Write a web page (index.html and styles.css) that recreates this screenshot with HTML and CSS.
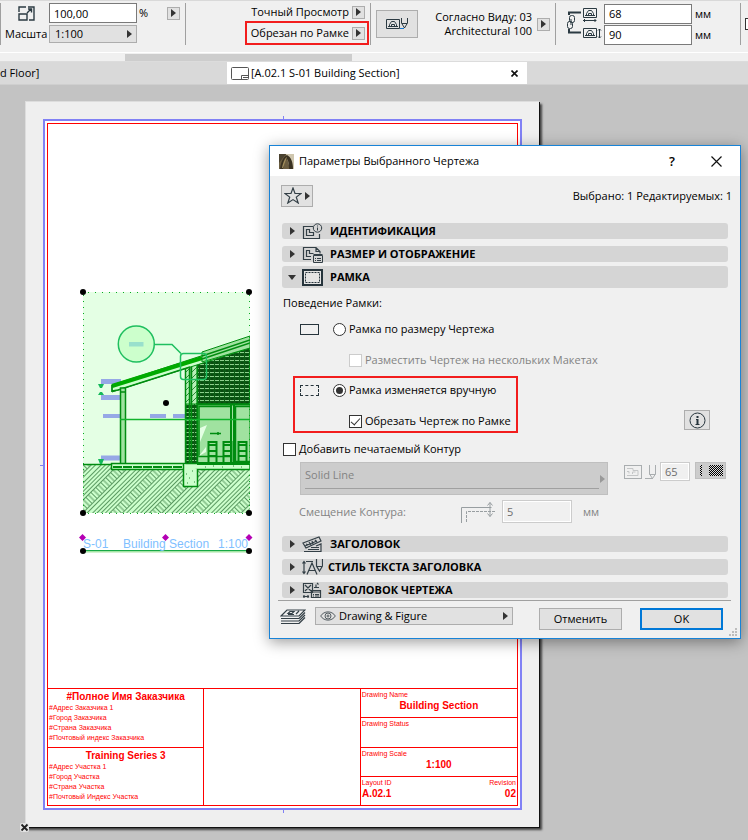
FILE: index.html
```html
<!DOCTYPE html>
<html lang="ru">
<head>
<meta charset="utf-8">
<title>Параметры Выбранного Чертежа</title>
<link rel="stylesheet" href="styles.css">
</head>
<body>
<header class="toolbar">
  <div class="group scale">
    <svg class="scale-icon" width="17" height="15" viewBox="0 0 17 15" fill="none" stroke="#2b3a42" stroke-width="1.4"><path d="M1 6V1h7M10 1h6v13h-5M1 8h8v6H1zM9 7l4-4M10 3h3.500v3.500"/></svg>
    <input class="field" type="text" value="100,00" aria-label="Масштаб, проценты">
    <span class="percent">%</span>
    <button class="mini" type="button" aria-label="Ещё"><i class="tri"></i></button>
    <label class="scale-label" for="scale">Масшта</label>
    <span class="picker"><select id="scale"><option>1:100</option></select><i class="tri"></i></span>
  </div>
  <div class="group preview">
    <div class="line"><span>Точный Просмотр</span><button class="mini" type="button" aria-label="Режим просмотра"><i class="tri"></i></button></div>
    <div class="line marked"><span>Обрезан по Рамке</span><button class="mini" type="button" aria-label="Режим рамки"><i class="tri"></i></button></div>
  </div>
  <div class="group pens">
    <button class="pen-button" type="button" aria-label="Набор перьев">
      <svg width="24" height="14" viewBox="0 0 24 14" fill="none" stroke="#2b3a42"><path d="M1.500 2.500h13v9h-13zM3 9.500h10M4.500 9.500v-2l2-3h3l2 3v2M6.500 9.500v-2h3v2M16.500 1v5l3 5 3-5V1M17 6.500h5M19.500 10v1"/><path d="M15 11.500h4" stroke="#1878d0"/></svg>
    </button>
    <p class="view-name">Согласно Виду: 03<br>Architectural 100</p>
    <button class="mini" type="button" aria-label="Выбор вида"><i class="tri"></i></button>
  </div>
  <div class="group size">
    <svg width="36" height="34" viewBox="0 0 36 34" fill="none" stroke="#2b3a42"><path d="M3 8V5.500h12M3 22v3.500h12" stroke-width="2"/><rect x="3.500" y="8.500" width="5" height="7" rx="2"/><rect x="1.500" y="14.500" width="5" height="7" rx="2"/><path d="M5 12v6"/><path d="M17.500 1.500h13v9h-13zM19 8.500h10M20.500 8.500v-2l2-3h3l2 3v2M22.500 8.500v-2h3v2M17 13.500h13M19 12l-1.500 1.500L19 15M28.500 12l1.500 1.500-1.500 1.500M17.500 21.500h13v9h-13zM19 28.500h10M20.500 28.500v-2l2-3h3l2 3v2M22.500 28.500v-2h3v2M33.500 22v9M32 23.500l1.500-1.500 1.500 1.500M32 29.500l1.500 1.500 1.500-1.500"/></svg>
    <div class="stack">
      <div class="line"><input class="field" id="w" type="text" value="68" aria-label="Ширина"><label for="w">мм</label></div>
      <div class="line"><input class="field" id="h" type="text" value="90" aria-label="Высота"><label for="h">мм</label></div>
    </div>
  </div>
  <div class="group rest"><i></i></div>
</header>
<div class="scroller"><i></i></div>
<nav class="tabs">
  <a class="tab" href="#floor">d Floor]</a>
  <a class="tab active" href="#layout">
    <svg width="18" height="13" viewBox="0 0 18 13" fill="none" stroke="#555"><rect x=".5" y=".5" width="17" height="12" rx="1"/><path d="M17.500 8.500h-7v4M12 10.500h5"/></svg>
    <span>[A.02.1 S-01 Building Section]</span>
    <svg class="tab-close" width="7" height="7" viewBox="0 0 7 7" stroke="#111" stroke-width="1.600"><path d="M.5.5l6 6M6.500.5l-6 6"/></svg>
  </a>
</nav>
<main class="canvas">
  <article class="sheet">
    <div class="margin-frame">
      <i class="tick top"></i><i class="tick bottom"></i><i class="tick left"></i>
      <div class="layout">
        <section class="titleblock">
          <div class="tb-col">
            <div class="tb-cell client"><h2>#Полное Имя Заказчика</h2><p>#Адрес Заказчика 1<br>#Город Заказчика<br>#Страна Заказчика<br>#Почтовый индекс Заказчика</p></div>
            <div class="tb-cell client"><h2>Training Series 3</h2><p>#Адрес Участка 1<br>#Город Участка<br>#Страна Участка<br>#Почтовый Индекс Участка</p></div>
          </div>
          <div class="tb-col"></div>
          <div class="tb-col facts">
            <div class="tb-cell"><small>Drawing Name</small><b>Building Section</b></div>
            <div class="tb-cell"><small>Drawing Status</small></div>
            <div class="tb-cell"><small>Drawing Scale</small><b>1:100</b></div>
            <div class="tb-cell pair"><small>Layout ID</small><small>Revision</small><b>A.02.1</b><b>02</b></div>
          </div>
        </section>
      </div>
    </div>
    <svg class="drawing" width="180" height="275" viewBox="76 284 180 275">
      <defs>
        <pattern id="earth" width="28" height="28" patternUnits="userSpaceOnUse" patternTransform="rotate(-45 83 464)">
          <rect width="28" height="28" fill="#ccffcc"/>
          <path d="M0 1.500h28M0 4.500h28M0 7.500h28M0 10.500h28M0 13.500h28M0 22.500h28M0 25.500h28" stroke="#5b9a62" stroke-width="1"/>
          <path d="M2 14v8M5.500 14v8M9 14v8M12.500 14v8M16 14v8M19.500 14v8M23 14v8M26.500 14v8" stroke="#5b9a62" stroke-width="1"/>
        </pattern>
        <pattern id="brick" width="5" height="4" patternUnits="userSpaceOnUse"><rect width="5" height="4" fill="#0b5a14"/><path d="M0 .5h4" stroke="#8ccf8c"/><path d="M1 3h2" stroke="#083c0c"/></pattern>
        <pattern id="diag" width="6" height="6" patternUnits="userSpaceOnUse"><rect width="6" height="6" fill="#b8efb8"/><path d="M0 6l6-6" stroke="#2c8a38"/></pattern>
        <clipPath id="crop"><rect x="83" y="292" width="167" height="222"/></clipPath>
      </defs>
      <rect x="83" y="292" width="167" height="221" fill="#e4ffe4"/>
      <g clip-path="url(#crop)" fill="none" stroke="#008c10">
        <path d="M83 464h167v49H83z" fill="url(#earth)" stroke="none"/>
        <path d="M83 464.500h29" stroke-width="1.500"/>
        <g fill="#96a8e6" stroke="none"><path d="M101 379h20v5h-20zM101 395h20v5h-20zM103 414h17v4h-17zM150 414h16v4h-16zM173 414h14v4h-14zM101 455.500h20v5h-20z"/></g>
        <g fill="#14b95a" stroke="none"><path d="M98 384h6l-2 4h-2zM98 395h6l-2-3h-2zM98 459h6l-2 5h-2z"/></g>
        <path d="M197 362l53-17v60h-53z" fill="url(#brick)"/>
        <path d="M197 404h53v60h-53z" fill="#a0e2a0"/>
        <path d="M199 406.500h32v50h-32zM235.500 406.500H251v55h-15.500z" stroke-width="1.500"/>
        <path d="M197 404.500h53" stroke-width="2"/>
        <path d="M200 442v-14l7-3zM199 456l7-4v-5z" fill="#e4ffe4" stroke="none"/>
        <path d="M210 433.500h11M218 432v3" stroke-width="1.500"/>
        <g stroke-width="2"><path d="M208.500 462v-20h8v20M223.500 462v-20h8v20M238.500 462v-20h8v20M208 445h9M208 451h9M208 456h9M223 445h9M223 451h9M223 456h9M238 445h9M238 451h9M238 456h9"/></g>
        <path d="M231 405v59M234 405v59" stroke-width="2"/>
        <path d="M185.500 366h4v98h-4z" fill="url(#diag)"/>
        <path d="M191 364h6v98h-6z" fill="url(#diag)"/>
        <path d="M186 404h11v60h-11z" fill="url(#brick)"/>
        <path d="M185.500 367v97M189.500 366v98M191.500 364v100M197.500 360v104" stroke-width="1.500"/>
        <path d="M112 385l138-45v8L112 392z" fill="#ccffcc"/>
        <path d="M112 386l90-28" stroke="#00aa00" stroke-width="4"/>
        <path d="M202 352l48-16v12l-48 14z" fill="#a0e2a0"/>
        <path d="M202 356l48-16M202 359l48-16" stroke-width="1.500"/>
        <path d="M112 385v6l6-1 72-23" stroke-width="1.500"/>
        <path d="M120.500 388h5v76h-5zM120 392h6" fill="#a0e2a0" stroke-width="1.500"/>
        <path d="M120 419.500h130" stroke="#12b32c" stroke-width="1.500"/>
        <path d="M111.500 463.500H250v6H111.500z" fill="#ccffcc" stroke-width="1.500"/>
        <path d="M113 467h70" stroke-width="2" stroke-dasharray="9 1"/>
        <path d="M183.500 464v22.500h14V469" fill="#ccffcc" stroke-width="1.500"/>
        <path d="M186 474h1M192 471h1M189 478h1M194 482h1M187 483h1M205 467h1M213 466h1M222 467h1M233 466h1M241 467h1" stroke="#2c8a38"/>
        <path d="M197 463.500h53" stroke-width="3"/>
        <g stroke="#1fbf5f" stroke-width="1.500"><circle cx="136.300" cy="344" r="18" fill="#ccffcc"/><path d="M155 344.500h17l9 9"/><rect x="180.500" y="353.500" width="26" height="26" rx="3"/></g>
        <path d="M129 342h14.500v4.500H129z" fill="#99e0cc" stroke="none"/>
      </g>
      <g fill="none" stroke="#08aa20" stroke-width="1"><path d="M83 292.500h167M83 513.500h167" stroke-dasharray="1 6" stroke-dashoffset="-5"/><path d="M83.500 292v221M249.500 292v221" stroke-dasharray="1 5" stroke-dashoffset="-3"/></g>
      <path d="M83 551.500h167" stroke="#a4e6a4" stroke-width="2"/><path d="M83 550.500h167" stroke="#18a848"/>
      <text class="caption" x="83" y="548">S-01</text><text class="caption" x="123" y="548">Building Section</text><text class="caption" x="248" y="548" text-anchor="end">1:100</text>
      <g fill="#b400b4"><path d="M82.500 534l3.500 3.500-3.500 3.500-3.500-3.500zM165.500 534l3.500 3.500-3.500 3.500-3.500-3.500zM249 534l3.500 3.500-3.500 3.500-3.500-3.500z"/></g>
      <g><circle cx="83" cy="292" r="3"/><circle cx="249" cy="292" r="3"/><circle cx="166" cy="403" r="3"/><circle cx="83" cy="513" r="3"/><circle cx="249" cy="513" r="3"/><circle cx="83" cy="551" r="3"/><circle cx="249" cy="551" r="3"/></g>
    </svg>
    <svg class="origin" width="9" height="9" viewBox="0 0 9 9"><rect width="9" height="9" rx="2" fill="#e4e4e4"/><path d="M1.500 1.500l6 6M7.500 1.500l-6 6" stroke="#222" stroke-width="1.800"/></svg>
  </article>

  <section class="dialog" role="dialog" aria-labelledby="dlg-title">
    <header class="dlg-title">
      <svg width="15" height="15" viewBox="0 0 15 15"><rect width="15" height="15" fill="#6b5d40"/><path d="M7 0h8v15h-4z" fill="#cfc6ae"/><path d="M0 0h7L3 5 0 9z" fill="#4a4230"/><path d="M1 15C2 8 4 3 8 1c4 2 6 7 6 14h-4C10 9 9 6 8 5 6 7 5 11 4 15z" fill="#3a3222"/><path d="M3 14C4 8 6 4 8 3l-1 3-3 8z" fill="#a08c5c"/></svg>
      <h1 id="dlg-title">Параметры Выбранного Чертежа</h1>
      <button type="button" class="bare help">?</button>
      <button type="button" class="bare" aria-label="Закрыть"><svg width="11" height="11" viewBox="0 0 11 11" stroke="#111" stroke-width="1.200"><path d="M.5.5l10 10M10.500.5l-10 10"/></svg></button>
    </header>
    <div class="dlg-top">
      <button class="star" type="button" aria-label="Избранное"><svg width="18" height="17" viewBox="0 0 18 17" fill="none" stroke="#333f46" stroke-width="1.200"><path d="M9 1l2 5.500h6l-4.700 3.600 1.900 5.900L9 12.600 3.800 16l1.900-5.900L1 6.500h6z"/></svg><i class="tri"></i></button>
      <p>Выбрано: 1 Редактируемых: 1</p>
    </div>
    <div class="panels">
      <button class="bar" type="button"><i class="tri"></i>
        <svg width="21" height="17" viewBox="0 0 21 17" fill="none" stroke="#333f46"><path d="M11 3.500H1.500v12h16V11M4.500 6.500h3v3h4v3h-7z" stroke-width="1.200"/><circle cx="15.500" cy="5" r="4.200"/><path d="M15.500 4.500v3M15.500 2.500v1"/></svg>
        <span>ИДЕНТИФИКАЦИЯ</span></button>
      <button class="bar" type="button"><i class="tri"></i>
        <svg width="21" height="17" viewBox="0 0 21 17" fill="none" stroke="#333f46"><path d="M9 13.500H1.500v-12H14l4 4v2M14 1.500v4h4M9 10.500H4.500v-6h3v3h4" stroke-width="1.200"/><path d="M11.500 9.500h9v7h-9zM11.500 8.500h9M13 12.500h1M15 12.500h4M13 14.500h1M15 14.500h4"/></svg>
        <span>РАЗМЕР И ОТОБРАЖЕНИЕ</span></button>
      <button class="bar open" type="button" aria-expanded="true"><i class="tri down"></i>
        <svg width="21" height="17" viewBox="0 0 21 17" fill="none" stroke="#26343c"><rect x="1" y="1" width="19" height="15" fill="#e4e4e4" stroke-width="2"/><rect x="3.500" y="3.500" width="14" height="10" stroke-dasharray="2 1"/></svg>
        <span>РАМКА</span></button>
      <div class="frame-panel">
        <p class="caption-row">Поведение Рамки:</p>
        <div class="option outer"><i class="swatch"></i><label><input type="radio" name="frame">Рамка по размеру Чертежа</label></div>
        <div class="option sub outer off"><label><input type="checkbox" disabled>Разместить Чертеж на нескольких Макетах</label></div>
        <div class="manual">
          <div class="highlight">
            <div class="option"><i class="swatch dashed"></i><label><input type="radio" name="frame" checked>Рамка изменяется вручную</label></div>
            <div class="option sub"><label><input type="checkbox" checked>Обрезать Чертеж по Рамке</label></div>
          </div>
          <button class="info" type="button" aria-label="Сведения"><svg width="17" height="17" viewBox="0 0 17 17" fill="none" stroke="#26343c"><circle cx="8.500" cy="8.500" r="7.500"/><path d="M8.500 7v5.500M8.500 4v2" stroke-width="2"/><path d="M7 7.500h2M6.500 12.500h4"/></svg></button>
        </div>
        <div class="option contour"><label><input type="checkbox">Добавить печатаемый Контур</label></div>
        <div class="line-row">
          <button class="line-type" type="button" disabled><span>Solid Line</span><i class="rule"></i><i class="tri"></i></button>
          <svg width="33" height="18" viewBox="0 0 33 18" fill="none" stroke="#a9adaf"><rect x=".5" y="2.500" width="17" height="13"/><path d="M3 5.500h6v2h5v5H3M3 8.500h2v2M8.500 11v-2h3" stroke="#c4c6c7"/><path d="M25.500 2v9l3 4.500 3-4.500V2M25.500 11.500h6M21 15.500h8"/></svg>
          <input class="pen-no" type="text" value="65" aria-label="Перо" disabled>
          <button class="pattern" type="button" aria-label="Цвет пера" disabled><i></i><i></i></button>
        </div>
        <div class="offset-row">
          <label for="offset">Смещение Контура:</label>
          <svg width="36" height="22" viewBox="0 0 36 22" fill="none" stroke="#989ea1"><path d="M.5 22V6.500h30M29 1.500v14M26.500 4.500l2.500-3 2.500 3M26.500 12.500l2.500 3 2.500-3"/><path d="M5.500 21V10.500H35" stroke-dasharray="3 1"/></svg>
          <input id="offset" type="text" value="5" disabled>
          <span>мм</span>
        </div>
      </div>
      <button class="bar" type="button"><i class="tri"></i>
        <svg width="21" height="17" viewBox="0 0 21 17" fill="none" stroke="#333f46" stroke-width="1.200"><path d="M1 7l16-6 2 4L4 12zM4 8l2 1M7 6l2 3M10 5l1 3M13 4l2 2M3 10l12-5M2 15.500h17V8l-5 2M9 11.500h8M6 13.500h11"/></svg>
        <span>ЗАГОЛОВОК</span></button>
      <button class="bar near" type="button"><i class="tri"></i>
        <svg width="21" height="17" viewBox="0 0 21 17" fill="none" stroke="#333f46" stroke-width="1.200"><path d="M2 2.500v12M.5 4.500L2 2.500l1.500 2M.5 12.500l1.500 2 1.500-2M5 15.500L10 4l5 11.500M7 11.500h6M4 2.500h7" /><path d="M14.500 0v7l3 5 3-5V0M14.500 7.500h6"/></svg>
        <span>СТИЛЬ ТЕКСТА ЗАГОЛОВКА</span></button>
      <button class="bar near" type="button"><i class="tri"></i>
        <svg width="21" height="17" viewBox="0 0 21 17" fill="none" stroke="#333f46" stroke-width="1.200"><path d="M1.500 1.500h9v9h-9zM3 3l6 6M9 3L3 9M14 2.500v3M12 5.500h5M15 1l1.500 1.500M1 14.500h6M2 13v3M6 13v3M9.500 8.500h9v7h-9zM9.500 10h9M11 12.500h1M13 12.500h4M11 14h1M13 14h4"/></svg>
        <span>ЗАГОЛОВОК ЧЕРТЕЖА</span></button>
    </div>
    <footer class="dlg-foot">
      <svg width="26" height="15" viewBox="0 0 26 15" fill="none" stroke="#333f46" stroke-width="1.200"><path d="M1 7l6-6h18l-6 6zM1 9.500h18l6-6M1 12h18l6-6M1 14.500h18l6-6M8 4.500l2-2h4l-2 2zM16 5l3-3M8 5.500h6"/></svg>
      <span class="picker layer"><svg width="16" height="10" viewBox="0 0 16 10" fill="none" stroke="#555e63"><path d="M.7 5C4-.5 12-.5 15.300 5 12 10.500 4 10.500.7 5z"/><circle cx="8" cy="5" r="3"/><circle cx="8" cy="5" r="1"/></svg><select aria-label="Слой"><option>Drawing &amp; Figure</option></select><i class="tri"></i></span>
      <button class="push" type="button">Отменить</button>
      <button class="push ok" type="button">OK</button>
    </footer>
    <svg class="grip" width="8" height="8" fill="#bdbdbd"><path d="M6 0h2v2H6zM6 3h2v2H6zM3 3h2v2H3zM0 6h2v2H0zM3 6h2v2H3zM6 6h2v2H6z"/></svg>
  </section>
</main>
</body>
</html>
```
FILE: styles.css
```css
* { box-sizing: border-box; }
body {
  margin: 0;
  min-height: 100vh;
  display: flex;
  flex-direction: column;
  background: #c3c3c3;
  color: #000;
  font: 11px/14px "Open Sans", "Noto Sans", sans-serif;
  overflow: hidden;
}
h1, h2, p { margin: 0; font: inherit; }
button, input, select { font: inherit; color: inherit; margin: 0; padding: 0; border-radius: 0; }
svg { flex: none; display: block; }
a { color: inherit; text-decoration: none; }

.tri {
  flex: none;
  border: solid transparent;
  border-width: 4px 0 4px 5px;
  border-left-color: #333;
}
.tri.down { border-color: #333 transparent transparent; border-width: 5px 4px 0; }

/* Toolbar */
.toolbar {
  display: flex;
  height: 52px;
  padding-top: 2px;
  background: #f0f0f0;
  border-top: 1px solid #d9d9d9;
}
.group {
  display: flex;
  flex: none;
  align-items: center;
  height: 42px;
  border-right: 1px solid #a0a0a0;
}
.field {
  width: 88px;
  height: 20px;
  padding: 0 4px;
  border: 1px solid #7a7a7a;
  background: #fff;
}
.mini {
  display: flex;
  flex: none;
  align-items: center;
  justify-content: center;
  width: 13px;
  height: 13px;
  border: 1px solid #adadad;
  background: #e1e1e1;
}
.scale {
  display: grid;
  grid-template-columns: 44px 88px 30px 13px;
  align-content: start;
  row-gap: 2px;
  width: 186px;
  padding-left: 4px;
  border-left: 1px solid #a0a0a0;
}
.scale > * { align-self: center; }
.scale-icon { margin-left: 13px; }
.percent { padding-left: 2px; }
.picker {
  display: flex;
  align-items: center;
  height: 18px;
  padding-right: 4px;
  border: 1px solid #adadad;
  background: #e1e1e1;
}
.picker select {
  flex: 1;
  min-width: 0;
  padding-left: 5px;
  border: 0;
  background: none;
  appearance: none;
}
.preview {
  flex-direction: column;
  align-items: flex-end;
  justify-content: flex-start;
  width: 185px;
  padding-right: 1px;
}
.line { display: flex; align-items: center; gap: 3px; }
.preview .line { height: 19px; padding-right: 4px; }
.preview .marked { height: 25px; padding-right: 2px; padding-left: 4px; border: 2px solid #f21d1d; }
.pens { gap: 5px; width: 185px; padding-left: 5px; }
.pen-button {
  display: flex;
  align-items: center;
  justify-content: center;
  width: 42px;
  height: 28px;
  border: 1px solid #adadad;
  background: #e1e1e1;
}
.view-name { width: 109px; text-align: right; }
.size { gap: 2px; width: 185px; padding-left: 10px; }
.stack { display: grid; gap: 1px; }
.rest { flex: 1; padding-left: 4px; border: 0; }
.rest i { width: 12px; height: 12px; border: 1px solid #333; background: #fff; }

.scroller { height: 10px; padding-top: 1px; background: #f0f0f0; border-top: 1px solid #fff; border-bottom: 1px solid #dcdcdc; }
.scroller i { display: block; width: 227px; height: 7px; margin-left: 125px; background: #cdcdcd; }

.tabs { display: flex; height: 23px; background: #d9d9d9; border-bottom: 1px solid #cfcfcf; }
.tab { display: flex; align-items: center; width: 227px; }
.tab.active { width: 300px; gap: 2px; padding: 0 9px 0 4px; background: #fff; }
.tab-close { margin-left: auto; }

/* Layout sheet */
.canvas { position: relative; display: flex; flex: 1; padding: 16px 209px 13px 25px; }
.sheet {
  position: relative;
  display: flex;
  flex: 1;
  padding: 17px;
  background: #efefef;
  border: 1px solid #ddd;
  border-width: 1px 0 0 1px;
  box-shadow: 1px 1px 0 #111, 3px 3px 2px #444;
}
.margin-frame { position: relative; display: flex; flex: 1; padding: 2px; border: 2px solid #8080f5; background: #fff; }
.layout { display: flex; flex: 1; align-items: flex-end; border: 1px solid #f00; }
.tick { position: absolute; background: #8080f5; }
.tick.top, .tick.bottom { left: 50%; width: 1px; height: 4px; }
.tick.top { top: -5px; }
.tick.bottom { bottom: -5px; }
.tick.left { top: 50%; left: -5px; width: 4px; height: 1px; }

.titleblock {
  display: grid;
  grid-template-columns: 1fr 1fr 1fr;
  flex: 1;
  height: 117px;
  border-top: 1px solid #f00;
  color: #f00;
  font: 7px/9px "Liberation Sans", Arial, sans-serif;
}
.tb-col { display: flex; flex-direction: column; border-right: 1px solid #f00; }
.tb-col:last-child { border: 0; }
.tb-cell { flex: 1; padding: 1px; border-top: 1px solid #f00; }
.tb-cell:first-child { border: 0; }
.client h2 { font-size: 10px; line-height: 13px; font-weight: bold; text-align: center; }
.client p { line-height: 10px; }
.facts small, .facts b { display: block; }
.facts small { font-size: 7px; }
.facts b { font-size: 10px; line-height: 14px; text-align: center; }
.facts .pair { display: grid; grid-template-columns: auto auto; justify-content: space-between; align-content: start; }
.pair :nth-child(even) { text-align: right; }

.drawing { position: absolute; left: 50px; top: 182px; }
.caption { font: 12px "Liberation Sans", Arial, sans-serif; fill: #7fbfff; }
.origin { position: absolute; left: -6px; bottom: -5px; }

/* Dialog */
.dialog {
  position: absolute;
  top: 60px;
  left: 269px;
  width: 472px;
  display: flex;
  flex-direction: column;
  border: 1px solid #1883d7;
  background: #f0f0f0;
  box-shadow: 0 3px 14px rgba(0, 0, 0, .4);
}
.dlg-title { display: flex; align-items: center; height: 30px; padding: 0 18px 0 9px; background: #fff; }
.dlg-title h1 { flex: 1; margin-left: 5px; }
.bare { display: flex; border: 0; background: none; }
.help { margin-right: 36px; font-size: 13px; font-weight: 600; }
.dlg-top { display: flex; align-items: center; justify-content: space-between; height: 47px; padding: 0 8px 8px 11px; }
.star { display: flex; align-items: center; justify-content: center; gap: 3px; width: 32px; height: 22px; border: 1px solid #adadad; background: #e1e1e1; }
.panels { display: flex; flex-direction: column; gap: 7px; padding: 0 12px; }
.bar {
  display: flex;
  align-items: center;
  gap: 7px;
  height: 16px;
  padding: 0 8px;
  border: 0;
  border-radius: 3px;
  background: #d5d5d5;
  font-weight: bold;
}
.bar .tri.down { margin: 0 -1px 0 -2px; }
.bar.open { height: 22px; margin-top: -3px; }
.bar.near { gap: 5px; }
.bar.near .tri { margin-right: 2px; }

.frame-panel { display: flex; flex-direction: column; margin: -2px 0 6px; }
.caption-row { padding-left: 1px; line-height: 20px; }
.option { display: flex; align-items: center; height: 20px; }
.option label { display: flex; align-items: center; gap: 3px; }
.option.outer { padding-left: 18px; margin-top: 6px; }
.option.sub { margin-top: 11px; padding-left: 54px; }
.option.sub.outer { padding-left: 67px; }
.off { color: #838383; }
.swatch { width: 19px; height: 11px; margin-right: 14px; border: 1px solid #26343c; }
.swatch.dashed { border-style: dashed; }
input[type="radio"], input[type="checkbox"] {
  flex: none;
  display: grid;
  place-items: center;
  width: 13px;
  height: 13px;
  border: 1px solid #333;
  background: #fff;
  appearance: none;
}
input[type="radio"] { border-radius: 50%; }
input[type="radio"]:checked::after { content: ""; width: 7px; height: 7px; border-radius: 50%; background: #333; }
input[type="checkbox"]:checked::after { content: ""; width: 4px; height: 8px; margin-top: -2px; border: solid #333; border-width: 0 1px 1px 0; transform: rotate(42deg); }
input[type="checkbox"]:disabled { border-color: #ccc; }
.manual { display: flex; justify-content: space-between; align-items: flex-end; margin: 6px 18px 6px 11px; }
.highlight { width: 225px; padding: 2px 0 0 5px; border: 2px solid #f21d1d; }
.highlight .option.sub { padding-left: 49px; }
.info { display: flex; align-items: center; justify-content: center; width: 26px; height: 20px; margin-bottom: 3px; border: 1px solid #adadad; background: #e1e1e1; }
.contour { padding-left: 1px; }
.line-row { display: flex; margin: 3px 2px 0 18px; }
.line-type {
  position: relative;
  flex: 1;
  height: 33px;
  padding: 0 4px;
  border: 1px solid #bfbfbf;
  background: #ccc;
  color: #838383;
  text-align: left;
}
.line-type span { display: block; margin-bottom: 6px; }
.line-type .rule { display: block; height: 1px; margin-right: 4px; background: #a0a0a0; }
.line-type .tri { position: absolute; right: 2px; top: 12px; border-left-color: #999; }
.line-row svg { margin: 1px 3px 0 16px; }
.pen-no, #offset { border: 1px solid #ccc; background: #f0f0f0; color: #6d6d6d; outline: 1px solid #fff; outline-offset: -2px; }
.pen-no { width: 30px; height: 19px; padding-left: 4px; }
.pattern { display: flex; align-items: center; gap: 7px; width: 31px; height: 17px; margin-left: 5px; padding: 0 2px 0 4px; border: 1px solid #bfbfbf; background: #ccc; }
.pattern i { flex: 1; height: 11px; background: repeating-conic-gradient(#000 0 25%, #ddd 0 50%) 0 0 / 2px 2px; }
.pattern i:first-child { flex: none; width: 2px; }
.offset-row { display: flex; align-items: center; margin: 5px 0 0 17px; color: #838383; }
.offset-row label { width: 162px; }
#offset { width: 70px; height: 23px; margin: 0 11px 0 5px; padding-left: 4px; }

.dlg-foot { display: flex; align-items: center; height: 38px; margin: 2px 9px 0 8px; padding-bottom: 2px; border-top: 1px solid #a0a0a0; }
.layer { width: 198px; margin: -5px 26px 0 9px; padding-left: 4px; }
.layer select { padding-left: 3px; }
.dlg-foot > svg { margin: -5px 0 0 2px; }
.push { width: 83px; height: 22px; border: 1px solid #adadad; background: #e1e1e1; }
.push.ok { margin-left: 18px; border: 2px solid #0078d7; }
.grip { position: absolute; right: 3px; bottom: 2px; }
```
